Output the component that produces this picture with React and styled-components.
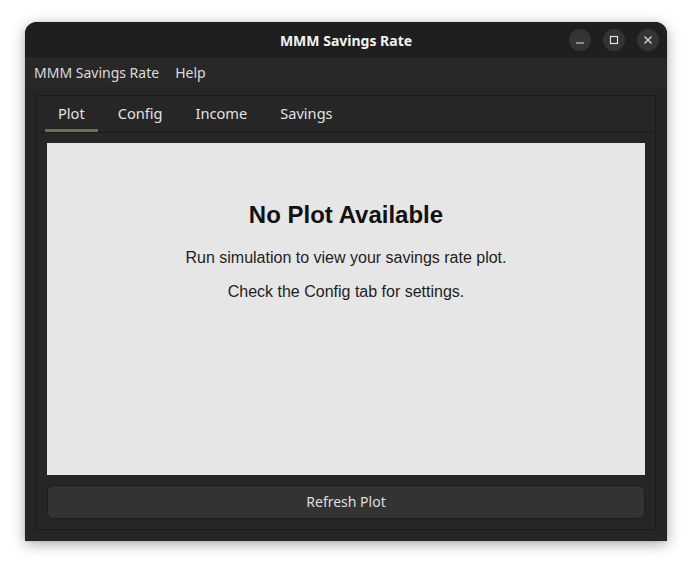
import React from "react";
import styled, { createGlobalStyle } from "styled-components";

const GlobalStyle = createGlobalStyle`
  html, body {
    margin: 0;
    padding: 0;
    background: #ffffff;
  }
  body {
    font-family: "Noto Sans", "DejaVu Sans", sans-serif;
  }
`;

export default function App() {
  const tabs = ["Plot", "Config", "Income", "Savings"];

  return (
    <>
      <GlobalStyle />
      <Desktop>
        <Window>
          <TitleBar>
            <Title>MMM Savings Rate</Title>
            <Controls>
              <ControlButton aria-label="Minimize">
                <svg width="10" height="10" viewBox="0 0 10 10">
                  <line x1="1" y1="8" x2="9" y2="8" stroke="#e0e0e0" strokeWidth="1.2" />
                </svg>
              </ControlButton>
              <ControlButton aria-label="Maximize">
                <svg width="10" height="10" viewBox="0 0 10 10">
                  <rect x="1.5" y="1.5" width="7" height="7" fill="none" stroke="#e0e0e0" strokeWidth="1.2" />
                </svg>
              </ControlButton>
              <ControlButton aria-label="Close">
                <svg width="10" height="10" viewBox="0 0 10 10">
                  <path d="M1.5 1.5 L8.5 8.5 M8.5 1.5 L1.5 8.5" stroke="#e0e0e0" strokeWidth="1.2" />
                </svg>
              </ControlButton>
            </Controls>
          </TitleBar>

          <MenuBar>
            <MenuItem>MMM Savings Rate</MenuItem>
            <MenuItem>Help</MenuItem>
          </MenuBar>

          <Body>
            <TabFrame>
              <TabBar>
                {tabs.map((t, i) => (
                  <Tab key={t} $active={i === 0}>
                    {t}
                  </Tab>
                ))}
              </TabBar>
              <Pane>
                <PlotArea>
                  <Heading>No Plot Available</Heading>
                  <Message>Run simulation to view your savings rate plot.</Message>
                  <Message>Check the Config tab for settings.</Message>
                </PlotArea>
                <RefreshButton>Refresh Plot</RefreshButton>
              </Pane>
            </TabFrame>
          </Body>
        </Window>
      </Desktop>
    </>
  );
}

const Desktop = styled.div`
  width: 692px;
  height: 569px;
  padding: 22px 0 0 25px;
  box-sizing: border-box;
`;

const Window = styled.div`
  width: 642px;
  height: 519px;
  display: flex;
  flex-direction: column;
  background: #252525;
  border-radius: 12px 12px 0 0;
  overflow: hidden;
  box-shadow: 0 3px 14px rgba(0, 0, 0, 0.35), 0 0 1px rgba(0, 0, 0, 0.4);
`;

const TitleBar = styled.div`
  position: relative;
  height: 36px;
  flex: none;
  display: flex;
  align-items: center;
  justify-content: center;
  background: #1f1f1f;
  border-bottom: 1px solid #2e2e2e;
`;

const Title = styled.div`
  color: #f2f2f2;
  font-size: 14px;
  font-weight: 700;
`;

const Controls = styled.div`
  position: absolute;
  right: 8px;
  top: 7px;
  display: flex;
  gap: 12px;
`;

const ControlButton = styled.div`
  width: 22px;
  height: 22px;
  border-radius: 50%;
  background: #343434;
  display: flex;
  align-items: center;
  justify-content: center;
`;

const MenuBar = styled.div`
  height: 27px;
  flex: none;
  display: flex;
  align-items: center;
  padding: 0 9px;
  gap: 16px;
  background: #282828;
  border-bottom: 1px solid #262626;
`;

const MenuItem = styled.div`
  color: #dcdcdc;
  font-size: 14px;
`;

const Body = styled.div`
  flex: 1;
  display: flex;
  padding: 8px 11px 11px 11px;
  background: #252525;
`;

const TabFrame = styled.div`
  flex: 1;
  display: flex;
  flex-direction: column;
  border: 1px solid #1a1a1a;
  background: #262626;
`;

const TabBar = styled.div`
  height: 36px;
  flex: none;
  display: flex;
  padding-left: 8px;
  gap: 7px;
  border-bottom: 1px solid #1b1b1b;
`;

const Tab = styled.div`
  padding: 1px 13px 0;
  display: flex;
  align-items: center;
  font-size: 14.6px;
  color: #e2e2e2;
  box-sizing: border-box;
  border-bottom: 3px solid ${(p) => (p.$active ? "#6f6f52" : "transparent")};
`;

const Pane = styled.div`
  flex: 1;
  display: flex;
  flex-direction: column;
  gap: 10px;
  padding: 10px;
`;

const PlotArea = styled.div`
  flex: 1;
  background: #e6e6e6;
  display: flex;
  flex-direction: column;
  align-items: center;
  padding-top: 58px;
  font-family: "Liberation Sans", Arial, sans-serif;
`;

const Heading = styled.h2`
  margin: 0 0 19px;
  font-size: 24px;
  line-height: 28px;
  font-weight: 700;
  color: #111111;
`;

const Message = styled.p`
  margin: 0 0 14px;
  font-size: 16px;
  line-height: 20px;
  color: #1e1e1e;
`;

const RefreshButton = styled.button`
  height: 34px;
  flex: none;
  padding: 0 0 2px;
  background: #333333;
  border: 1px solid #1c1c1c;
  border-radius: 6px;
  color: #dedede;
  font-family: "Noto Sans", "DejaVu Sans", sans-serif;
  font-size: 14px;
`;
